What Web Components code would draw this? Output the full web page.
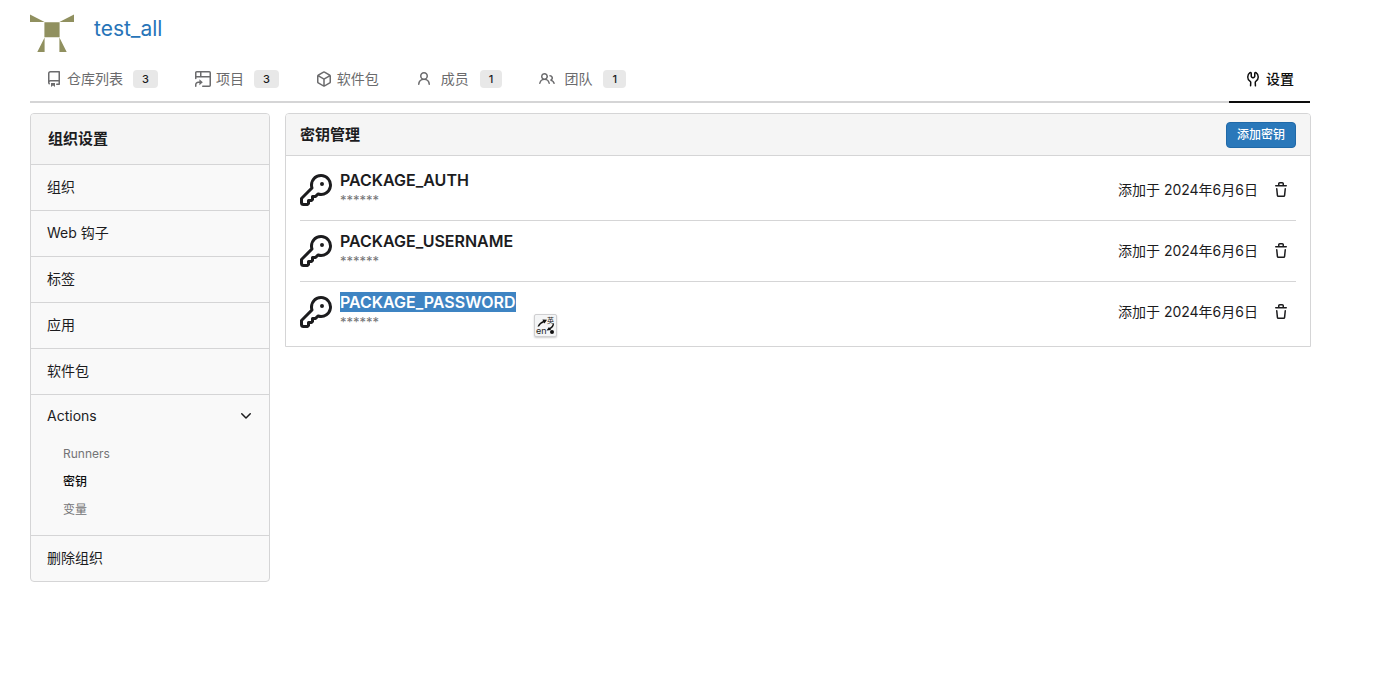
<!DOCTYPE html>
<html lang="zh-CN">
<head>
<meta charset="utf-8">
<title>test_all</title>
<style>
body { margin: 0; background: #fff; color: #1c1c1e; font: 14px/20px Inter, "Noto Sans CJK SC", sans-serif; }
</style>
</head>
<body>
<org-page></org-page>
<script>
const ICONS = {
  repo: 'M2 2.5A2.5 2.5 0 0 1 4.5 0h8.75a.75.75 0 0 1 .75.75v12.5a.75.75 0 0 1-.75.75h-2.5a.75.75 0 0 1 0-1.5h1.75v-2h-8a1 1 0 0 0-.714 1.7.75.75 0 1 1-1.072 1.05A2.495 2.495 0 0 1 2 11.5Zm10.5-1h-8a1 1 0 0 0-1 1v6.708A2.486 2.486 0 0 1 4.5 9h8ZM5 12.25a.25.25 0 0 1 .25-.25h3.5a.25.25 0 0 1 .25.25v3.25a.25.25 0 0 1-.4.2l-1.45-1.087a.249.249 0 0 0-.3 0L5.4 15.7a.25.25 0 0 1-.4-.2Z',
  package: 'm8.878.392 5.25 3.045c.54.314.872.89.872 1.514v6.098a1.75 1.75 0 0 1-.872 1.514l-5.25 3.045a1.75 1.75 0 0 1-1.756 0l-5.25-3.045A1.75 1.75 0 0 1 1 11.049V4.951c0-.624.332-1.201.872-1.514L7.122.392a1.75 1.75 0 0 1 1.756 0ZM7.875 1.69l-4.63 2.685L8 7.133l4.755-2.758-4.63-2.685a.248.248 0 0 0-.25 0ZM2.5 5.677v5.372c0 .09.047.171.125.216l4.625 2.683V8.432Zm6.25 8.271 4.625-2.683a.25.25 0 0 0 .125-.216V5.677L8.75 8.432Z',
  person: 'M10.561 8.073a6.005 6.005 0 0 1 3.432 5.142.75.75 0 1 1-1.498.07 4.5 4.5 0 0 0-8.99 0 .75.75 0 0 1-1.498-.07 6.004 6.004 0 0 1 3.431-5.142 3.999 3.999 0 1 1 5.123 0ZM10.5 5a2.5 2.5 0 1 0-5 0 2.5 2.5 0 0 0 5 0Z',
  people: 'M2 5.5a3.5 3.5 0 1 1 5.898 2.549 5.508 5.508 0 0 1 3.034 4.084.75.75 0 1 1-1.482.235 4 4 0 0 0-7.9 0 .75.75 0 0 1-1.482-.236A5.507 5.507 0 0 1 3.102 8.05 3.493 3.493 0 0 1 2 5.5ZM11 4a3.001 3.001 0 0 1 2.22 5.018 5.01 5.01 0 0 1 2.56 3.012.749.749 0 0 1-.885.954.752.752 0 0 1-.549-.514 3.507 3.507 0 0 0-2.522-2.372.75.75 0 0 1-.574-.73v-.352a.75.75 0 0 1 .416-.672A1.5 1.5 0 0 0 11 5.5.75.75 0 0 1 11 4Zm-5.5-.5a2 2 0 1 0-.001 3.999A2 2 0 0 0 5.5 3.5Z',
  tools: 'M5.433 2.304A4.492 4.492 0 0 0 3.5 6c0 1.598.832 3.002 2.09 3.802.518.328.929.923.902 1.64v.008l-.164 3.337a.75.75 0 1 1-1.498-.073l.163-3.33c.002-.085-.05-.216-.207-.316A5.996 5.996 0 0 1 2 6a5.993 5.993 0 0 1 2.567-4.92 1.482 1.482 0 0 1 1.673-.04c.462.296.76.827.76 1.423v2.82c0 .082.041.16.11.206l.75.51a.25.25 0 0 0 .28 0l.75-.51A.249.249 0 0 0 9 5.282V2.463c0-.596.298-1.127.76-1.423a1.482 1.482 0 0 1 1.673.04A5.993 5.993 0 0 1 14 6a5.996 5.996 0 0 1-2.786 5.068c-.157.1-.209.23-.207.315l.163 3.33a.752.752 0 0 1-1.094.714.75.75 0 0 1-.404-.64l-.164-3.345c-.027-.717.384-1.312.902-1.64A4.495 4.495 0 0 0 12.5 6a4.492 4.492 0 0 0-1.933-3.696c-.024.017-.067.067-.067.159v2.82a1.75 1.75 0 0 1-.767 1.448l-.75.51a1.75 1.75 0 0 1-1.966 0l-.75-.51A1.75 1.75 0 0 1 5.5 5.283V2.463c0-.092-.043-.142-.067-.159Z',
  key: 'M10.5 0a5.499 5.499 0 1 1-1.288 10.848l-.932.932a.749.749 0 0 1-.53.22H7v.75a.749.749 0 0 1-.22.53l-.5.5a.749.749 0 0 1-.53.22H5v.75a.749.749 0 0 1-.22.53l-.5.5a.749.749 0 0 1-.53.22h-2A1.75 1.75 0 0 1 0 14.25v-2c0-.199.079-.389.22-.53l4.932-4.932A5.5 5.5 0 0 1 10.5 0Zm-4 5.5c-.001.431.069.86.205 1.269a.75.75 0 0 1-.181.768L1.5 12.56v1.69c0 .138.112.25.25.25h1.69l.06-.06v-1.19a.75.75 0 0 1 .75-.75h1.19l.06-.06v-1.19a.75.75 0 0 1 .75-.75h1.19l1.023-1.025a.75.75 0 0 1 .768-.18A4 4 0 1 0 6.5 5.5ZM11 6a1 1 0 1 1 0-2 1 1 0 0 1 0 2Z',
  trash: 'M11 1.75V3h2.25a.75.75 0 0 1 0 1.5H2.75a.75.75 0 0 1 0-1.5H5V1.75C5 .784 5.784 0 6.75 0h2.5C10.216 0 11 .784 11 1.75ZM4.496 6.675l.66 6.6a.25.25 0 0 0 .249.225h5.19a.25.25 0 0 0 .249-.225l.66-6.6a.75.75 0 0 1 1.492.149l-.66 6.6A1.748 1.748 0 0 1 10.595 15h-5.19a1.75 1.75 0 0 1-1.741-1.575l-.66-6.6a.75.75 0 1 1 1.492-.15ZM6.5 1.75V3h3V1.75a.25.25 0 0 0-.25-.25h-2.5a.25.25 0 0 0-.25.25Z',
  chevron: 'M12.78 5.22a.749.749 0 0 1 0 1.06l-4.25 4.25a.749.749 0 0 1-1.06 0L3.22 6.28a.749.749 0 1 1 1.06-1.06L8 8.939l3.72-3.719a.749.749 0 0 1 1.06 0Z'
};

function define(name, html, setup) {
  const template = document.createElement('template');
  template.innerHTML = html;
  customElements.define(name, class extends HTMLElement {
    connectedCallback() {
      if (this.shadowRoot) return;
      const root = this.attachShadow({ mode: 'open' });
      root.append(template.content.cloneNode(true));
      if (setup) setup(this, root);
    }
  });
}

define('ui-icon', `
<style>
:host { display: block; flex: none; width: var(--size, 16px); height: var(--size, 16px); }
svg { display: block; width: 100%; height: 100%; fill: currentColor; }
</style>
<svg viewBox="0 0 16 16" aria-hidden="true"></svg>`, (host, root) => {
  const name = host.getAttribute('name');
  root.querySelector('svg').innerHTML = name === 'project'
    ? '<g fill="none" stroke="currentColor" stroke-width="1.5" stroke-linecap="round" stroke-linejoin="round"><path d="M.75 7.5V1.75a1 1 0 0 1 1-1h12.5a1 1 0 0 1 1 1v12.5a1 1 0 0 1-1 1H7.75M.75 5.75h14.5M5.75.75v5"/><path d="M.75 15.25v-1.500a2.500 2.500 0 0 1 2.500-2.500h2"/></g><path d="M4.400 8.200 7.800 11.250 4.400 14.300Z"/>'
    : `<path d="${ICONS[name]}"/>`;
});

define('org-header', `
<style>
:host { display: flex; align-items: flex-start; gap: 20px; height: 56px; }
svg { display: block; width: 44px; height: 44px; margin-top: 8px; fill: #90905f; }
a { margin-top: 15px; font-size: 21px; line-height: 28px; color: #2774b8; text-decoration: none; }
</style>
<svg viewBox="0 0 44 44" aria-hidden="true"><path d="M0 6.5 14.6 14H0ZM44 6.5 29.4 14H44ZM14.4 14.3h15.2v15H14.4ZM14.6 29.5V44H7.3ZM29.4 29.5V44h7.3Z"/></svg>
<a href="#"><slot></slot></a>`);

define('nav-tab', `
<style>
:host { display: block; }
a { display: flex; align-items: center; box-sizing: border-box; height: 47px; padding: 1px 16px 0; border-bottom: 2px solid transparent; color: #6b6b6d; text-decoration: none; }
ui-icon { margin-right: 5px; }
.count { margin-left: 10px; padding: 0 9px; border-radius: 4px; background: #e8e8e8; color: #1c1c1e; font-size: 11px; font-weight: 500; line-height: 18px; }
:host([wide]) ui-icon { margin-right: 9px; }
:host([wide]) .count { margin-left: 11px; }
:host([active]) a { border-color: #0d0d0d; color: #0d0d0d; font-weight: 500; }
</style>
<a href="#"><slot></slot></a>`, (host, root) => {
  const icon = document.createElement('ui-icon');
  icon.setAttribute('name', host.getAttribute('icon'));
  root.querySelector('a').prepend(icon);
  const count = host.getAttribute('count');
  if (count) {
    const badge = document.createElement('span');
    badge.className = 'count';
    badge.textContent = count;
    root.querySelector('a').append(badge);
  }
});

define('nav-tabs', `
<style>
:host { display: block; }
nav { display: flex; gap: 5px; height: 47px; box-shadow: inset 0 -2px #d5d5d6; }
::slotted([active]) { margin-left: auto; }
</style>
<nav><slot></slot></nav>`);

define('side-item', `
<style>
:host { display: block; border-top: 1px solid #d5d5d6; }
a { display: block; padding: 12px 16px 13px; color: inherit; text-decoration: none; }
</style>
<a href="#"><slot></slot></a>`);

define('side-group', `
<style>
:host { display: block; border-top: 1px solid #d5d5d6; }
summary { display: flex; justify-content: space-between; align-items: center; padding: 11px 15px 14px 16px; list-style: none; }
.list { display: grid; padding: 0 32px 11px; }
::slotted(a) { font-size: 12px; line-height: 28px; color: #747476; text-decoration: none; }
::slotted(a[aria-current]) { color: #0d0d0d; font-weight: 500; }
</style>
<details open><summary><slot name="label"></slot><ui-icon name="chevron"></ui-icon></summary><div class="list"><slot></slot></div></details>`);

define('side-menu', `
<style>
:host { display: block; box-sizing: border-box; border: 1px solid #d5d5d6; border-radius: 4px; background: #f9f9f9; overflow: hidden; }
h2 { margin: 0; padding: 15px 17px; background: #f5f5f5; font-size: 15px; font-weight: 600; line-height: 20px; }
</style>
<h2><slot name="title"></slot></h2>
<nav><slot></slot></nav>`);

define('secret-row', `
<style>
:host { display: flex; align-items: center; gap: 8px; padding: 10px 0; border-top: 1px solid #d5d5d6; }
:host(:first-of-type) { border-top: 0; }
ui-icon.key { --size: 32px; }
.info { flex: 1; }
.name { position: relative; width: max-content; font-size: 16px; font-weight: 600; line-height: 20px; }
:host([selected]) .label { display: block; background: #3e84c3; color: #fff; }
.mask { font-size: 13px; line-height: 20px; color: #747476; }
button { display: grid; place-items: center; width: 30px; height: 30px; padding: 0; border: 0; background: none; color: inherit; }
</style>
<ui-icon class="key" name="key"></ui-icon>
<div class="info"><div class="name"><span class="label"></span><slot name="overlay"></slot></div><div class="mask">******</div></div>
<span><slot></slot></span>
<button type="button" aria-label="删除"><ui-icon name="trash"></ui-icon></button>`, (host, root) => {
  root.querySelector('.label').textContent = host.getAttribute('name');
});

/* Floating translate control shown next to the selected text. */
define('translate-pop', `
<style>
:host { position: absolute; top: 22px; left: calc(100% + 18px); }
button { display: block; width: 23px; height: 23px; padding: 0; border: 1px solid #cfcfd1; border-radius: 2px; background: #f4f5f6; box-shadow: 0 1px 2px #0003; }
svg { display: block; width: 21px; height: 21px; }
text { font-family: Inter, "Noto Sans CJK SC", sans-serif; font-weight: 400; fill: #222; }
</style>
<button type="button" aria-label="翻译"><svg viewBox="0 0 21 21"><text x="1" y="19" font-size="9">en</text><text x="12" y="8" font-size="7">英</text><path d="M2.500 11.500Q4 7.500 8 6L7.500 4.500 12 4.800 9.500 8.500 8.800 7.500Q5.500 8.500 4 11.500ZM19 8.500Q19 12 15.500 14l.5 1-4.500.5 2.500-3.500.7 1Q17.500 11 18 8.500Z" fill="#111"/><circle cx="17" cy="17" r="2" fill="#111"/></svg></button>`);

define('secret-panel', `
<style>
:host { display: block; box-sizing: border-box; border: 1px solid #d5d5d6; border-radius: 4px 4px 0 0; }
header { display: flex; justify-content: space-between; align-items: center; padding: 8px 14px 7px; border-bottom: 1px solid #d5d5d6; border-radius: 3px 3px 0 0; background: #f5f5f5; }
h1 { margin: 0; font-size: 15px; font-weight: 600; line-height: 20px; }
button { height: 26px; padding: 0 10px; border: 1px solid #2069a8; border-radius: 4px; background: #2a78ba; color: #fff; font: inherit; font-size: 12px; font-weight: 500; line-height: 24px; }
.body { padding: 4px 14px; }
</style>
<header><h1><slot name="title"></slot></h1><button type="button">添加密钥</button></header>
<div class="body"><slot></slot></div>`);

define('org-page', `
<style>
:host { display: block; max-width: 1280px; margin: 0 64px 0 30px; }
main { display: grid; grid-template-columns: 240px minmax(0, 1fr); align-items: start; gap: 15px; margin-right: -1px; padding-top: 10px; }
</style>
<org-header>test_all</org-header>
<nav-tabs>
  <nav-tab icon="repo" count="3">仓库列表</nav-tab>
  <nav-tab icon="project" count="3">项目</nav-tab>
  <nav-tab icon="package">软件包</nav-tab>
  <nav-tab icon="person" count="1" wide>成员</nav-tab>
  <nav-tab icon="people" count="1" wide>团队</nav-tab>
  <nav-tab icon="tools" active>设置</nav-tab>
</nav-tabs>
<main>
  <side-menu>
    <span slot="title">组织设置</span>
    <side-item>组织</side-item>
    <side-item>Web 钩子</side-item>
    <side-item>标签</side-item>
    <side-item>应用</side-item>
    <side-item>软件包</side-item>
    <side-group>
      <span slot="label">Actions</span>
      <a href="#">Runners</a>
      <a href="#" aria-current="page">密钥</a>
      <a href="#">变量</a>
    </side-group>
    <side-item>删除组织</side-item>
  </side-menu>
  <secret-panel>
    <span slot="title">密钥管理</span>
    <secret-row name="PACKAGE_AUTH">添加于 2024年6月6日</secret-row>
    <secret-row name="PACKAGE_USERNAME">添加于 2024年6月6日</secret-row>
    <secret-row name="PACKAGE_PASSWORD" selected><translate-pop slot="overlay"></translate-pop>添加于 2024年6月6日</secret-row>
  </secret-panel>
</main>`);
</script>
</body>
</html>
